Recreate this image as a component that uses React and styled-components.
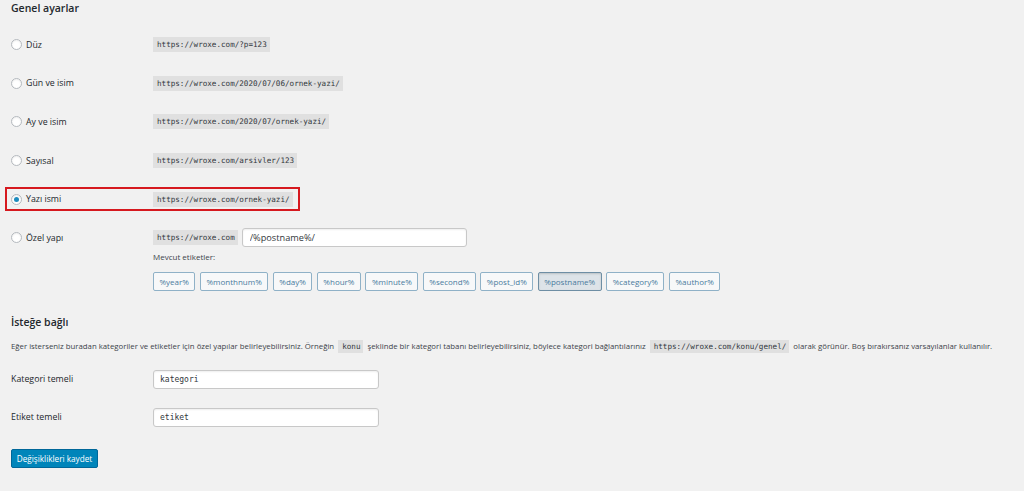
import React from 'react'
import styled, { createGlobalStyle } from 'styled-components'

const options = [
    { id: 'plain', label: 'Düz', code: 'https://wroxe.com/?p=123' },
    { id: 'day', label: 'Gün ve isim', code: 'https://wroxe.com/2020/07/06/ornek-yazi/' },
    { id: 'month', label: 'Ay ve isim', code: 'https://wroxe.com/2020/07/ornek-yazi/' },
    { id: 'numeric', label: 'Sayısal', code: 'https://wroxe.com/arsivler/123' },
    { id: 'postname', label: 'Yazı ismi', code: 'https://wroxe.com/ornek-yazi/' },
]

const tags = ['%year%', '%monthnum%', '%day%', '%hour%', '%minute%', '%second%', '%post_id%', '%postname%', '%category%', '%author%']

const App = () => {
    const [selected, setSelected] = React.useState('postname')
    return (
        <Page>
            <GlobalStyle />
            <Heading>Genel ayarlar</Heading>
            <Options>
                {options.map(option => (
                    <OptionRow key={option.id} highlight={option.id === 'postname'}>
                        <Label>
                            <Radio checked={selected === option.id} onClick={() => setSelected(option.id)} />
                            {option.label}
                        </Label>
                        <CustomField><Code>{option.code}</Code></CustomField>
                    </OptionRow>
                ))}
                <OptionRow>
                    <Label>
                        <Radio checked={selected === 'custom'} onClick={() => setSelected('custom')} />
                        Özel yapı
                    </Label>
                    <CustomField>
                        <Code>https://wroxe.com</Code>
                        <TextInput wide defaultValue="/%postname%/" />
                    </CustomField>
                </OptionRow>
            </Options>
            <TagBlock>
                <Hint>Mevcut etiketler:</Hint>
                <TagList>
                    {tags.map(tag => (
                        <Tag key={tag} pressed={tag === '%postname%'}>{tag}</Tag>
                    ))}
                </TagList>
            </TagBlock>
            <Heading second>İsteğe bağlı</Heading>
            <Description>
                Eğer isterseniz buradan kategoriler ve etiketler için özel yapılar belirleyebilirsiniz. Örneğin <Code>konu</Code> şeklinde bir kategori tabanı belirleyebilirsiniz, böylece kategori bağlantılarınız <Code>https://wroxe.com/konu/genel/</Code> olarak görünür. Boş bırakırsanız varsayılanlar kullanılır.
            </Description>
            <FieldRow first>
                <FieldLabel>Kategori temeli</FieldLabel>
                <TextInput defaultValue="kategori" />
            </FieldRow>
            <FieldRow>
                <FieldLabel>Etiket temeli</FieldLabel>
                <TextInput defaultValue="etiket" />
            </FieldRow>
            <SaveButton>Değişiklikleri kaydet</SaveButton>
        </Page>
    )
}

export default App

const GlobalStyle = createGlobalStyle`
    html, body {
        margin: 0;
        background: #f1f1f1;
    }
    body {
        font-family: "Open Sans", "Noto Sans", sans-serif;
        color: #23282d;
    }
`

const Page = styled.div`
    width: 1024px;
    height: 491px;
    padding: 0 0 0 11px;
    box-sizing: border-box;
    overflow: hidden;
`

const Heading = styled.h2`
    margin: 0;
    padding-top: ${props => props.second ? '24px' : '1px'};
    font-size: 10.5px;
    font-weight: 600;
    line-height: 14px;
    color: #23282d;
`

const Options = styled.div`
    display: flex;
    flex-direction: column;
    gap: 15px;
    margin-top: 18px;
`

const OptionRow = styled.div`
    display: grid;
    grid-template-columns: 142px 1fr;
    align-items: center;
    height: 23.6px;
    position: relative;
    ${props => props.highlight && `
        &::after {
            content: '';
            position: absolute;
            left: -6px;
            top: 0;
            width: 295px;
            height: 24px;
            border: 2px solid #d6191f;
            box-sizing: border-box;
            pointer-events: none;
        }
    `}
`

const Label = styled.label`
    display: flex;
    align-items: center;
    gap: 4px;
    font-size: 8.8px;
    line-height: 12px;
    cursor: pointer;
`

const Radio = styled.span`
    width: 11px;
    height: 11px;
    border-radius: 50%;
    border: 1px solid #b4b9be;
    background: #fff;
    box-sizing: border-box;
    box-shadow: inset 0 1px 2px rgba(0, 0, 0, 0.07);
    display: flex;
    align-items: center;
    justify-content: center;
    flex: none;
    &::before {
        content: '';
        width: 5px;
        height: 5px;
        border-radius: 50%;
        background: #1e8cbe;
        display: ${props => props.checked ? 'block' : 'none'};
    }
`

const Code = styled.code`
    font-family: "DejaVu Sans Mono", "Liberation Mono", monospace;
    font-size: 7.6px;
    line-height: 11px;
    padding: 2px 3px 2px 4px;
    background: rgba(0, 0, 0, 0.07);
    color: #32373c;
    white-space: nowrap;
`

const CustomField = styled.div`
    display: flex;
    align-items: center;
    gap: 4px;
`

const TextInput = styled.input`
    width: ${props => props.wide ? '225px' : '226px'};
    height: 19px;
    box-sizing: border-box;
    border: 1px solid #c8c8c8;
    border-radius: 3px;
    background: #fff;
    box-shadow: inset 0 1px 2px rgba(0, 0, 0, 0.07);
    padding: 0 0 0 ${props => props.wide ? '7px' : '6px'};
    font-family: ${props => props.wide ? '"Open Sans", sans-serif' : '"DejaVu Sans Mono", "Liberation Mono", monospace'};
    font-size: ${props => props.wide ? '9.2px' : '8px'};
    color: #32373c;
    outline: none;
`

const TagBlock = styled.div`
    margin-left: 142px;
    margin-top: 1px;
`

const Hint = styled.div`
    font-size: 8px;
    line-height: 12px;
    color: #3c434a;
`

const TagList = styled.div`
    display: flex;
    gap: 4.5px;
    margin-top: 9px;
`

const Tag = styled.button`
    height: 19px;
    padding: 0 5.5px;
    font-family: "Open Sans", sans-serif;
    font-size: 8px;
    color: #4a7b9d;
    background: ${props => props.pressed ? '#dde3e8' : '#f7f8f9'};
    border: 1px solid ${props => props.pressed ? '#6e8ea4' : '#8fb1c7'};
    border-radius: 2px;
    box-shadow: ${props => props.pressed ? 'inset 0 1px 2px rgba(0,0,0,0.15)' : 'none'};
    cursor: pointer;
`

const Description = styled.p`
    margin: 11px 0 0;
    font-size: 7.8px;
    line-height: 13px;
    color: #3c434a;
    white-space: nowrap;
    & code {
        margin: 0 2px;
    }
`

const FieldRow = styled.div`
    display: grid;
    grid-template-columns: 142px 1fr;
    align-items: center;
    margin-top: ${props => props.first ? '17px' : '19px'};
`

const FieldLabel = styled.div`
    font-size: 8.8px;
    line-height: 12px;
`

const SaveButton = styled.button`
    display: block;
    margin-top: 22px;
    width: 87px;
    height: 19px;
    padding: 0;
    border: 1px solid #006799;
    border-radius: 2px;
    background: #0085ba;
    color: #fff;
    font-family: "Open Sans", sans-serif;
    font-size: 8.2px;
    cursor: pointer;
`
